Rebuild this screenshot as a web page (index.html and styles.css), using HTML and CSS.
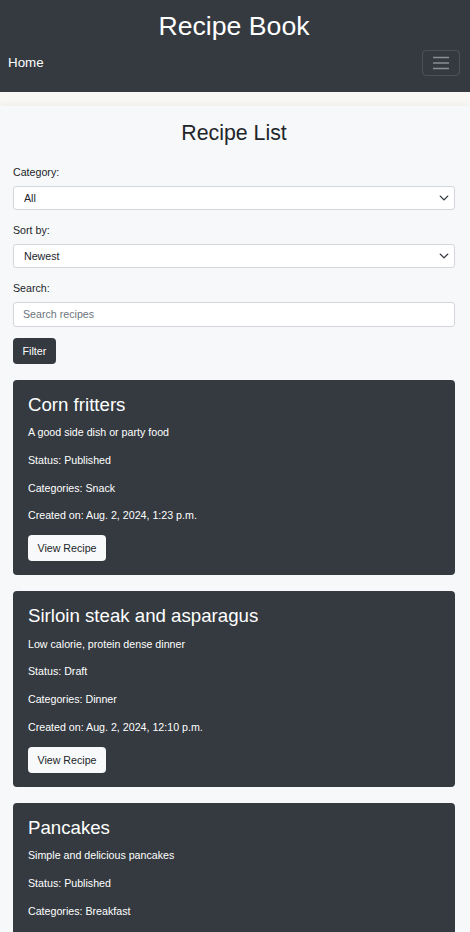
FILE: index.html
```html
<!DOCTYPE html>
<html lang="en">
<head>
<meta charset="utf-8">
<title>Recipe Book</title>
<link rel="stylesheet" href="styles.css">
</head>
<body>
<header class="site-header">
  <h1 class="site-title">Recipe Book</h1>
  <nav class="navbar">
    <a class="brand" href="#">Home</a>
    <button class="toggler" type="button" aria-label="Toggle navigation">
      <svg width="18" height="14" viewBox="0 0 18 14"><path d="M1 1.5h16M1 7h16M1 12.5h16" stroke="#8a8e93" stroke-width="1.6" fill="none"/></svg>
    </button>
  </nav>
</header>
<main class="main">
  <h2 class="page-title">Recipe List</h2>
  <form class="filters">
    <label class="form-label" for="cat">Category:</label>
    <select id="cat" class="form-select"><option>All</option></select>
    <label class="form-label" for="sort">Sort by:</label>
    <select id="sort" class="form-select"><option>Newest</option></select>
    <label class="form-label" for="q">Search:</label>
    <input id="q" class="form-input" type="text" placeholder="Search recipes">
    <button class="btn btn-dark" type="button">Filter</button>
  </form>
  <div class="cards">
    <div class="card">
      <h3 class="card-title">Corn fritters</h3>
      <p>A good side dish or party food</p>
      <p>Status: Published</p>
      <p>Categories: Snack</p>
      <p>Created on: Aug. 2, 2024, 1:23 p.m.</p>
      <a class="btn btn-light" href="#">View Recipe</a>
    </div>
    <div class="card">
      <h3 class="card-title">Sirloin steak and asparagus</h3>
      <p>Low calorie, protein dense dinner</p>
      <p>Status: Draft</p>
      <p>Categories: Dinner</p>
      <p>Created on: Aug. 2, 2024, 12:10 p.m.</p>
      <a class="btn btn-light" href="#">View Recipe</a>
    </div>
    <div class="card">
      <h3 class="card-title">Pancakes</h3>
      <p>Simple and delicious pancakes</p>
      <p>Status: Published</p>
      <p>Categories: Breakfast</p>
      <p>Created on: Aug. 1, 2024, 9:02 a.m.</p>
      <a class="btn btn-light" href="#">View Recipe</a>
    </div>
  </div>
</main>
</body>
</html>
```

FILE: styles.css
```css
* { box-sizing: border-box; }
html, body {
  margin: 0;
  padding: 0;
}
body {
  background: #faf8f4;
  font-family: "Liberation Sans", Arial, sans-serif;
  font-size: 10.67px;
  line-height: 16px;
  color: #212529;
}
.site-header {
  background: #343a40;
  padding: 10px 10px 16px 8px;
}
.site-title {
  margin: 0;
  text-align: center;
  color: #fff;
  font-size: 26.67px;
  line-height: 32px;
  font-weight: 400;
}
.navbar {
  margin-top: 8px;
  display: flex;
  justify-content: space-between;
  align-items: center;
}
.brand {
  color: #fff;
  text-decoration: none;
  font-size: 13.33px;
  line-height: 20px;
}
.toggler {
  width: 38px;
  height: 26px;
  padding: 0;
  background: transparent;
  border: 1px solid rgba(255, 255, 255, 0.12);
  border-radius: 4px;
  display: flex;
  align-items: center;
  justify-content: center;
}
.toggler svg { display: block; }
.main {
  margin-top: 14px;
  background: #f7f8fa;
  box-shadow: 0 -3px 6px rgba(0, 0, 0, 0.035);
  padding: 15px 15px 40px 13px;
  min-height: 900px;
}
.page-title {
  margin: 0 0 17px;
  text-align: center;
  font-size: 21.33px;
  line-height: 25.6px;
  font-weight: 400;
  color: #212529;
}
.filters {
  display: flex;
  flex-direction: column;
  align-items: stretch;
}
.form-label {
  display: block;
  margin-bottom: 6px;
  color: #212529;
}
.form-select,
.form-input {
  display: block;
  width: 100%;
  height: 24px;
  margin: 0 0 12px;
  border: 1px solid #d3d7dc;
  border-radius: 3px;
  background-color: #fff;
  font-family: inherit;
  font-size: 10.67px;
  color: #212529;
}
.form-select {
  -webkit-appearance: none;
  appearance: none;
  padding: 0 28px 0 10px;
  background-image: url("data:image/svg+xml,%3csvg xmlns='http://www.w3.org/2000/svg' viewBox='0 0 16 16'%3e%3cpath fill='none' stroke='%23343a40' stroke-linecap='round' stroke-linejoin='round' stroke-width='2.2' d='m2 5 6 6 6-6'/%3e%3c/svg%3e");
  background-repeat: no-repeat;
  background-position: right 5px center;
  background-size: 10px 10px;
}
.form-input {
  height: 25px;
  padding: 0 9px;
  margin-bottom: 11px;
}
.form-input::placeholder { color: #6c757d; }
.btn {
  display: inline-block;
  height: 26px;
  line-height: 26px;
  padding: 0 9.5px;
  border-radius: 4px;
  border: 0;
  font-family: inherit;
  font-size: 10.67px;
  text-decoration: none;
  text-align: center;
}
.btn-dark {
  align-self: flex-start;
  background: #343a40;
  color: #fff;
}
.btn-light {
  background: #f8f9fa;
  color: #212529;
}
.cards {
  margin-top: 16px;
  display: flex;
  flex-direction: column;
  gap: 16px;
}
.card {
  background: #343a40;
  border-radius: 4px;
  padding: 14px 15px 14px;
  color: #fff;
}
.card-title {
  margin: 0 0 8.3px;
  font-size: 18.67px;
  line-height: 22.4px;
  font-weight: 400;
}
.card p {
  margin: 0 0 11.7px;
}
```
